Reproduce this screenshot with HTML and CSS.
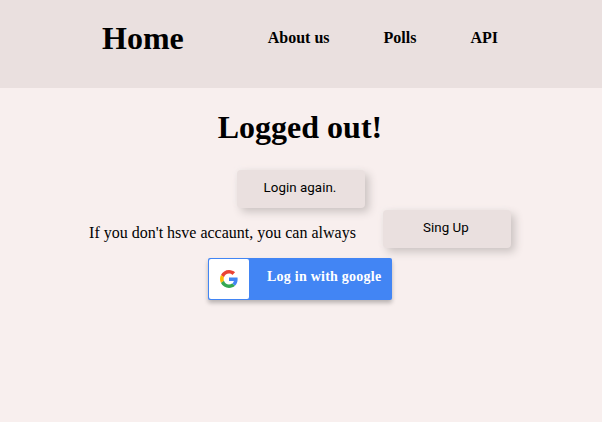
FILE: index.html
```
<!DOCTYPE html>
<html lang="en">
<head>
<meta charset="utf-8">
<title>Logged out</title>
<link rel="stylesheet" href="styles.css">
</head>
<body>
<header class="header">
  <h1 class="brand">Home</h1>
  <nav class="nav">
    <a class="nav-link">About us</a>
    <a class="nav-link">Polls</a>
    <a class="nav-link">API</a>
  </nav>
</header>
<main class="main">
  <h1 class="title">Logged out!</h1>
  <button class="btn">Login again.</button>
  <div class="signup">
    <span class="signup-text">If you don't hsve accaunt, you can always</span>
    <button class="btn">Sing Up</button>
  </div>
  <a class="google-btn">
    <span class="google-icon">
      <svg width="18" height="18" viewBox="0 0 48 48">
        <path fill="#EA4335" d="M24 9.5c3.54 0 6.71 1.22 9.21 3.6l6.85-6.85C35.9 2.38 30.47 0 24 0 14.62 0 6.51 5.38 2.56 13.22l7.98 6.19C12.43 13.72 17.74 9.5 24 9.5z"/>
        <path fill="#4285F4" d="M46.98 24.55c0-1.57-.15-3.09-.38-4.55H24v9.02h12.94c-.58 2.96-2.26 5.48-4.78 7.18l7.73 6c4.51-4.18 7.09-10.36 7.09-17.65z"/>
        <path fill="#FBBC05" d="M10.53 28.59c-.48-1.45-.76-2.99-.76-4.59s.27-3.14.76-4.59l-7.98-6.19C.92 16.46 0 20.12 0 24c0 3.88.92 7.54 2.56 10.78l7.97-6.19z"/>
        <path fill="#34A853" d="M24 48c6.48 0 11.93-2.13 15.89-5.81l-7.73-6c-2.15 1.45-4.92 2.3-8.16 2.3-6.26 0-11.57-4.22-13.47-9.91l-7.98 6.19C6.51 42.62 14.62 48 24 48z"/>
      </svg>
    </span>
    <b class="google-text">Log in with google</b>
  </a>
</main>
</body>
</html>
```
FILE: styles.css
```
body {
  margin: 0;
  min-height: 100vh;
  background: #f8efee;
  color: #000;
  font: 16px "Liberation Serif", "Times New Roman", serif;
}

.header {
  box-sizing: border-box;
  height: 88px;
  padding: 20px 0 0 102px;
  display: flex;
  align-items: flex-start;
  gap: 84px;
  background: #eae0df;
}

.brand,
.title {
  margin: 0;
  font-size: 32px;
  line-height: 37px;
}

.nav {
  display: flex;
  gap: 54px;
  padding-top: 9px;
}

.nav-link {
  font-weight: bold;
  line-height: 18px;
}

.main {
  display: flex;
  flex-direction: column;
  align-items: center;
  padding-top: 21px;
}

.title {
  margin-bottom: 24px;
  margin-right: 2px;
}

.btn {
  box-sizing: border-box;
  width: 128px;
  height: 38px;
  padding: 0 2px 4px 0;
  border: 0;
  border-radius: 4px;
  background: #eae0df;
  box-shadow: 4px 4px 8px #cbc3c2, -2px -2px 4px #f5eeed;
  color: #000;
  font: 13.333px Roboto, sans-serif;
  letter-spacing: 0.05px;
}

.signup {
  display: flex;
  align-items: center;
  gap: 27px;
  margin: 2px 2px 10px 0;
}

.signup-text {
  padding-top: 8px;
}

.google-btn {
  box-sizing: border-box;
  width: 184px;
  height: 42px;
  margin-right: 2px;
  padding: 1px;
  display: flex;
  border-radius: 2px;
  background: #4285f4;
  box-shadow: 0 3px 4px rgba(0, 0, 0, 0.25);
}

.google-icon {
  width: 40px;
  height: 40px;
  display: flex;
  align-items: center;
  justify-content: center;
  border-radius: 2px;
  background: #fff;
}

.google-text {
  padding: 9px 0 0 18px;
  color: #fff;
  font-size: 14px;
  line-height: 17px;
  letter-spacing: 0.24px;
  white-space: nowrap;
}
```
